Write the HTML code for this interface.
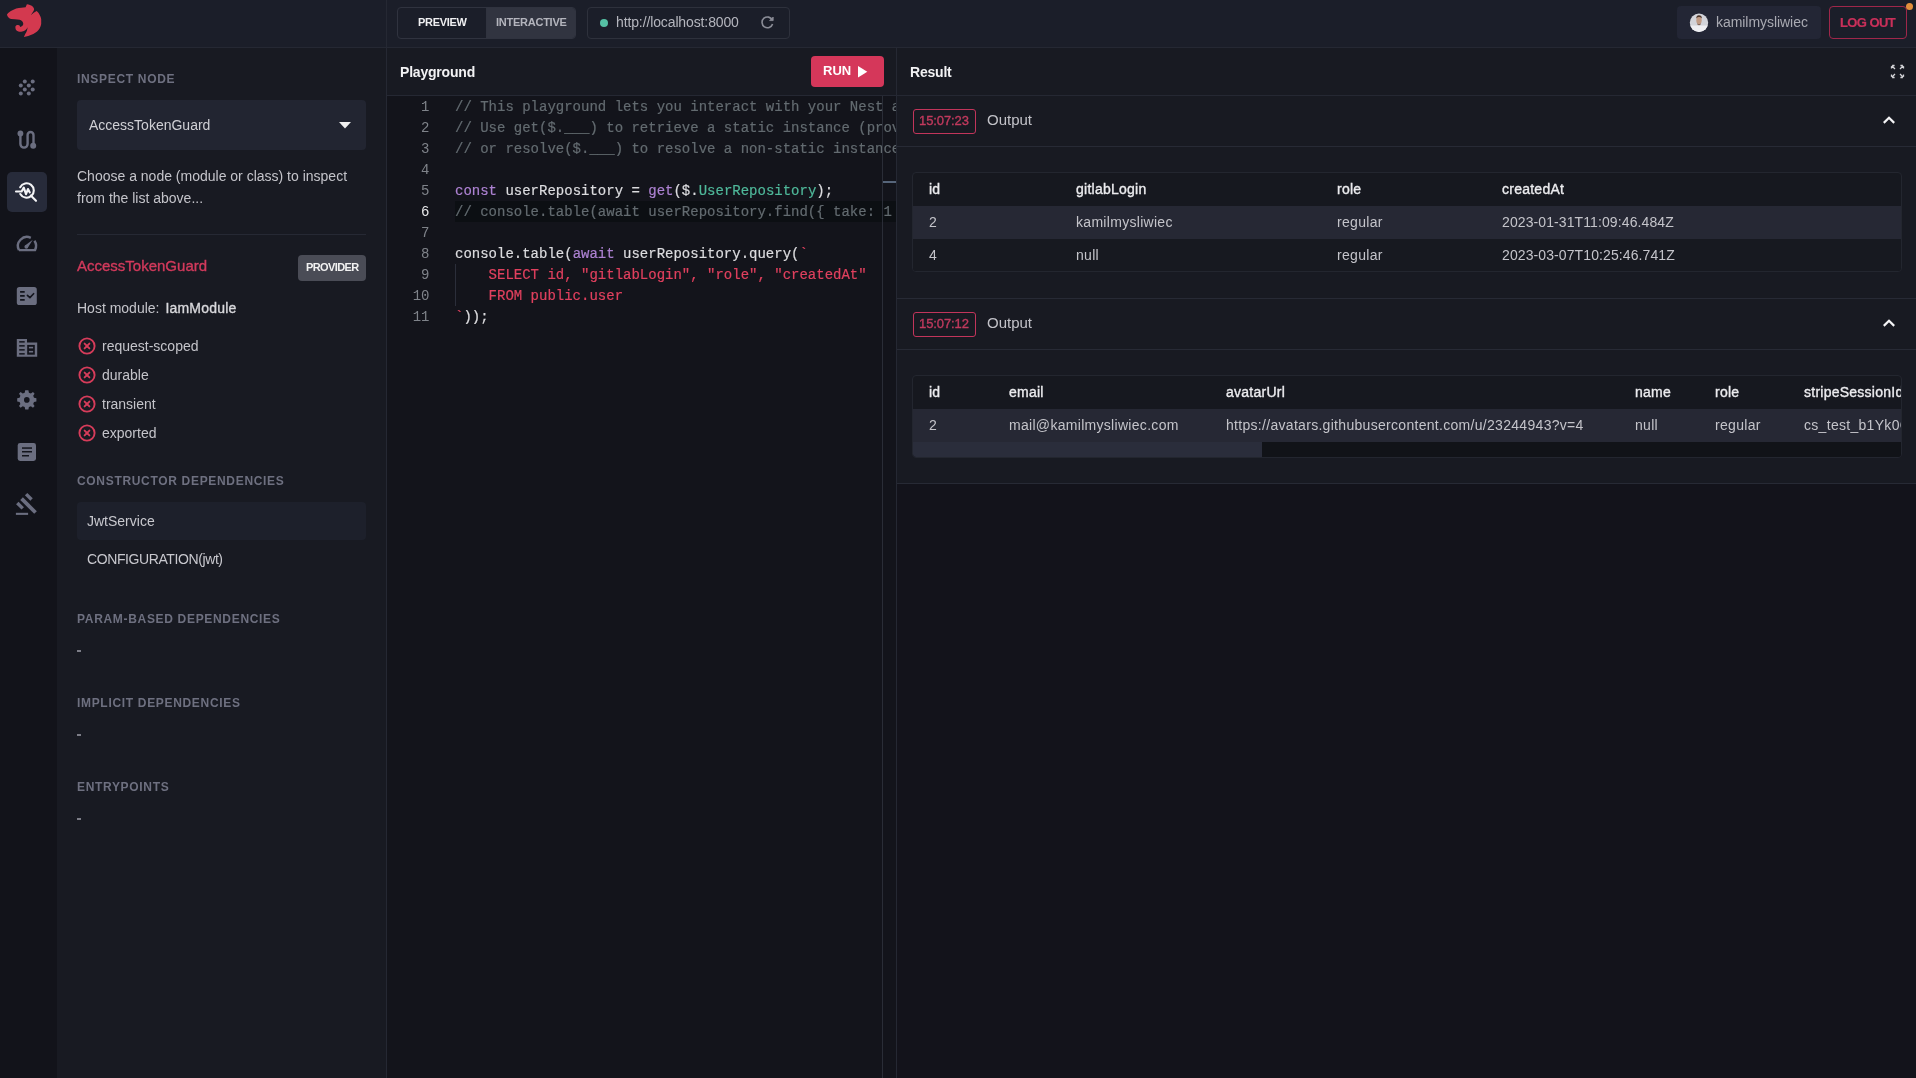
<!DOCTYPE html>
<html><head><meta charset="utf-8">
<style>
*{margin:0;padding:0;box-sizing:border-box}
html,body{width:1916px;height:1078px;overflow:hidden;background:#181a22;font-family:"Liberation Sans",sans-serif;color:#d4d4d8}
.a{position:absolute}
.t{position:absolute;white-space:nowrap;line-height:20px;will-change:transform}
</style></head><body>
<div class="a" style="left:0;top:0;width:1916px;height:47px;background:#1b1e29"></div>
<div class="a" style="left:0;top:47px;width:1916px;height:1px;background:#252833"></div>
<div class="a" style="left:0;top:48px;width:57px;height:1030px;background:#12131a"></div>
<div class="a" style="left:386px;top:0;width:1px;height:1078px;background:#252833"></div>
<div class="a" style="left:896px;top:48px;width:1px;height:1030px;background:#252833"></div>
<div class="a" style="left:387px;top:95px;width:1529px;height:1px;background:#252833"></div>
<div class="a" style="left:387px;top:96px;width:509px;height:982px;background:#13141b"></div>
<svg class="a" style="left:0;top:0" width="56" height="46" viewBox="0 0 56 46">
<path fill="#d3394f" d="M7.0 14.3 L8.5 12.8 Q10.5 11 12.4 10.2 L16.2 8.5 Q19 7.8 21.3 7.7 L25.6 7.3 L26.9 4.3 Q28.5 4.4 29.9 5.1 Q32 5.8 32.9 6.8 Q34.3 8.2 34.1 9.8 Q33.5 11.5 32.4 12.8 L30.7 15.4 Q32.2 14 33.7 12.8 L36.7 11.1 Q38.6 12.8 39.7 14.9 Q41 17 41.2 19.2 L41.2 23.9 Q40.8 26.3 39.7 28.2 Q38.6 30 37.1 31.6 Q35.4 33 33.3 34.1 Q30.8 35.2 28.2 35.9 L23.9 36.9 Q24.6 35.5 25.2 34.1 Q26.2 32.4 26.9 30.7 L27.7 27.3 Q26.8 28.8 25.6 29.9 Q24 31 22.2 31.6 Q20.2 32 18.4 31.6 Q16.5 30.8 15.8 29.4 Q15.2 28 15.4 26.5 Q16 25.1 17.1 25 Q18.5 24.8 19.2 25.2 Q20 26 20.1 26.9 Q21.4 26.6 22.2 26 Q23.2 25 23.3 23.9 Q23.2 22.4 22.2 21.3 Q21 20.2 19.6 19.8 Q17.5 19.2 14.9 19.2 L11.1 19 Q9.6 18.5 8.5 17.5 Q7.6 16.6 7.3 15.8 Z"/>
</svg>
<!-- SIDE -->
<div class="a" style="left:7px;top:172px;width:40px;height:40px;background:#272b3a;border-radius:5px"></div>
<svg class="a" style="left:0;top:48px" width="57" height="480" viewBox="0 48 57 480">
<g fill="#6b6e80">
<circle cx="24.8" cy="81.6" r="2"/><circle cx="32.7" cy="81.6" r="2"/>
<circle cx="20.8" cy="85.6" r="2"/><circle cx="28.8" cy="85.6" r="2"/>
<circle cx="24.8" cy="89.6" r="2"/><circle cx="32.7" cy="89.6" r="2"/>
<circle cx="20.8" cy="93.5" r="2"/><circle cx="28.8" cy="93.5" r="2"/>
</g>
<g fill="none" stroke="#6b6e80" stroke-width="2.4" stroke-linecap="round">
<path d="M20.4 133.5 V144 A3.6 3.6 0 0 0 27.6 144 V135 A2.95 2.95 0 0 1 33.5 135 V145.8"/>
</g>
<circle cx="20.4" cy="133.5" r="2.9" fill="#6b6e80"/><circle cx="33.2" cy="145.8" r="3" fill="#6b6e80"/>
<!-- active inspect -->
<g fill="none" stroke="#f4f4f6" stroke-width="2.1" stroke-linecap="round" stroke-linejoin="round">
<path d="M20.2 187.2 A7.2 7.2 0 1 1 20.3 194"/>
<path d="M30.8 195.6 L36 200.8"/>
<path d="M16 191.5 H21.6 L23.8 187.6 L26 194.2 L28 189 L29.8 192.4"/>
</g>
<!-- gauge -->
<g fill="none" stroke="#6b6e80" stroke-width="2.4" stroke-linecap="butt">
<path d="M19 250.1 A9 9 0 0 1 30.8 237.8"/>
<path d="M34.4 240.8 A9 9 0 0 1 35 250.1 H19"/>
</g>
<path d="M25 245.6 L32.8 239.8 L27.6 248 Z" fill="#6b6e80"/>
<circle cx="26.3" cy="246.8" r="1.9" fill="#6b6e80"/>
<!-- checklist -->
<rect x="16.8" y="287.1" width="20" height="17.9" rx="2.6" fill="#6b6e80"/>
<g stroke="#13141c" stroke-width="1.6" fill="none">
<path d="M20.1 291.9 H24.7 M20.1 295.9 H24.7 M20.1 299.9 H24.7"/>
<path d="M27.4 295.3 L29.9 297.6 L33.6 293.7" stroke-linecap="round" stroke-linejoin="round"/>
</g>
<!-- building -->
<path d="M16.8 338.9 H27 V342.6 H37.2 V356.8 H16.8 Z" fill="#6b6e80"/>
<g fill="#13141c">
<rect x="19.2" y="341.1" width="5.5" height="1.5"/><rect x="19.2" y="345.1" width="5.5" height="1.5"/>
<rect x="19.2" y="349.1" width="5.5" height="1.5"/><rect x="19.2" y="353.1" width="5.5" height="1.5"/>
<rect x="27.2" y="344.9" width="7.6" height="9.8"/>
</g>
<g fill="#6b6e80"><rect x="28.9" y="346.8" width="4.2" height="1.6"/><rect x="28.9" y="350.9" width="4.2" height="1.6"/></g>
<!-- gear -->
<g transform="translate(26.8 399.9)" fill="#6b6e80">
<path d="M-1.6 -9.6 H1.6 L2.1 -7.2 L4.1 -6.4 L6.2 -7.8 L7.8 -6.2 L6.4 -4.1 L7.2 -2.1 L9.6 -1.6 V1.6 L7.2 2.1 L6.4 4.1 L7.8 6.2 L6.2 7.8 L4.1 6.4 L2.1 7.2 L1.6 9.6 H-1.6 L-2.1 7.2 L-4.1 6.4 L-6.2 7.8 L-7.8 6.2 L-6.4 4.1 L-7.2 2.1 L-9.6 1.6 V-1.6 L-7.2 -2.1 L-6.4 -4.1 L-7.8 -6.2 L-6.2 -7.8 L-4.1 -6.4 L-2.1 -7.2 Z"/>
<circle r="6.6"/>
</g>
<circle cx="26.8" cy="399.9" r="2.8" fill="#13141c"/>
<!-- document -->
<rect x="17.7" y="443" width="18.3" height="18" rx="2.4" fill="#6b6e80"/>
<g fill="#13141c"><rect x="22" y="447.3" width="10" height="1.5"/><rect x="22" y="451" width="10" height="1.5"/><rect x="22" y="455" width="7" height="1.5"/></g>
<!-- gavel -->
<g fill="#6b6e80">
<rect x="15.9" y="512.8" width="12.2" height="2.1"/>
<g transform="translate(28.55 505.6) rotate(45)">
<rect x="-9.85" y="-1.85" width="19.7" height="3.7"/>
<rect x="-9.85" y="-8.1" width="7.7" height="3.4"/>
<rect x="-9.85" y="4.38" width="7.7" height="3.4"/>
</g>
</g>
</svg>
<!-- /SIDE -->
<div class="t" style="left:77px;top:69.14px;font-size:12px;color:#6e7080;font-weight:bold;letter-spacing:0.68px;">INSPECT NODE</div>
<div class="a" style="left:77px;top:100px;width:289px;height:50px;background:#222531;border-radius:4px"></div>
<div class="t" style="left:89px;top:114.95px;font-size:14px;color:#d0d0d5;">AccessTokenGuard</div>
<svg class="a" style="left:338px;top:121px" width="14" height="8" viewBox="0 0 14 8"><path d="M1 1 L13 1 L7 7.5 Z" fill="#f0f0f0"/></svg>
<div class="t" style="left:77px;top:165.95px;font-size:14px;color:#c4c4ca;">Choose a node (module or class) to inspect</div>
<div class="t" style="left:77px;top:187.75px;font-size:14px;color:#c4c4ca;">from the list above...</div>
<div class="a" style="left:77px;top:234px;width:289px;height:1px;background:#262934"></div>
<div class="t" style="left:77px;top:255.60px;font-size:15px;color:#d23a5c;-webkit-text-stroke:0.35px currentColor;">AccessTokenGuard</div>
<div class="a" style="left:298px;top:255px;width:68px;height:26px;background:#4a4c56;border-radius:4px"></div>
<div class="t" style="left:305.5px;top:257.49px;font-size:11px;color:#f2f2f2;font-weight:bold;letter-spacing:-0.6px;">PROVIDER</div>
<div class="t" style="left:77px;top:297.75px;font-size:14px;color:#c4c4ca;">Host module: <span style="color:#d8d8dc;margin-left:2px;-webkit-text-stroke:0.35px #d8d8dc;letter-spacing:0.2px">IamModule</span></div>
<svg class="a" style="left:77px;top:335.6px" width="20" height="20" viewBox="0 0 20 20"><circle cx="10" cy="10" r="7.6" fill="none" stroke="#d63c5a" stroke-width="1.9"/><path d="M7.6 7.6 L12.4 12.4 M12.4 7.6 L7.6 12.4" stroke="#d63c5a" stroke-width="1.9" stroke-linecap="round"/></svg>
<div class="t" style="left:102px;top:335.75px;font-size:14px;color:#c4c4ca;">request-scoped</div>
<svg class="a" style="left:77px;top:364.6px" width="20" height="20" viewBox="0 0 20 20"><circle cx="10" cy="10" r="7.6" fill="none" stroke="#d63c5a" stroke-width="1.9"/><path d="M7.6 7.6 L12.4 12.4 M12.4 7.6 L7.6 12.4" stroke="#d63c5a" stroke-width="1.9" stroke-linecap="round"/></svg>
<div class="t" style="left:102px;top:364.75px;font-size:14px;color:#c4c4ca;">durable</div>
<svg class="a" style="left:77px;top:393.6px" width="20" height="20" viewBox="0 0 20 20"><circle cx="10" cy="10" r="7.6" fill="none" stroke="#d63c5a" stroke-width="1.9"/><path d="M7.6 7.6 L12.4 12.4 M12.4 7.6 L7.6 12.4" stroke="#d63c5a" stroke-width="1.9" stroke-linecap="round"/></svg>
<div class="t" style="left:102px;top:393.75px;font-size:14px;color:#c4c4ca;">transient</div>
<svg class="a" style="left:77px;top:422.6px" width="20" height="20" viewBox="0 0 20 20"><circle cx="10" cy="10" r="7.6" fill="none" stroke="#d63c5a" stroke-width="1.9"/><path d="M7.6 7.6 L12.4 12.4 M12.4 7.6 L7.6 12.4" stroke="#d63c5a" stroke-width="1.9" stroke-linecap="round"/></svg>
<div class="t" style="left:102px;top:422.75px;font-size:14px;color:#c4c4ca;">exported</div>
<div class="t" style="left:77px;top:470.64px;font-size:12px;color:#6e7080;font-weight:bold;letter-spacing:0.68px;">CONSTRUCTOR DEPENDENCIES</div>
<div class="a" style="left:77px;top:502px;width:289px;height:38px;background:#1d202b;border-radius:4px"></div>
<div class="t" style="left:87px;top:510.85px;font-size:14px;color:#c8c8ce;">JwtService</div>
<div class="t" style="left:87px;top:549.15px;font-size:14px;color:#c8c8ce;letter-spacing:-0.4px;">CONFIGURATION(jwt)</div>
<div class="t" style="left:77px;top:609.04px;font-size:12px;color:#6e7080;font-weight:bold;letter-spacing:0.68px;">PARAM-BASED DEPENDENCIES</div>
<div class="a" style="left:77px;top:650px;width:4px;height:2px;background:#7c7d87"></div>
<div class="t" style="left:77px;top:692.94px;font-size:12px;color:#6e7080;font-weight:bold;letter-spacing:0.68px;">IMPLICIT DEPENDENCIES</div>
<div class="a" style="left:77px;top:734px;width:4px;height:2px;background:#7c7d87"></div>
<div class="t" style="left:77px;top:776.94px;font-size:12px;color:#6e7080;font-weight:bold;letter-spacing:0.68px;">ENTRYPOINTS</div>
<div class="a" style="left:77px;top:818px;width:4px;height:2px;background:#7c7d87"></div>
<div class="a" style="left:397px;top:7px;width:179px;height:32px;border:1px solid #30333f;border-radius:4px;overflow:hidden"><div class="a" style="left:88px;top:0;width:90px;height:30px;background:#313440;border-left:1px solid #30333f"></div></div>
<div class="t" style="left:417.5px;top:12.19px;font-size:11px;color:#f0f0f2;font-weight:bold;letter-spacing:-0.3px;">PREVIEW</div>
<div class="t" style="left:495.5px;top:12.19px;font-size:11px;color:#b4b5bd;font-weight:bold;letter-spacing:-0.25px;">INTERACTIVE</div>
<div class="a" style="left:587px;top:7px;width:203px;height:32px;border:1px solid #2e313c;border-radius:4px"></div>
<div class="a" style="left:600px;top:19px;width:8px;height:8px;border-radius:50%;background:#55c0a4"></div>
<div class="t" style="left:616px;top:12.15px;font-size:14px;color:#b5b6be;letter-spacing:-0.12px;">http://localhost:8000</div>
<svg class="a" style="left:759px;top:14px" width="17" height="17" viewBox="0 0 17 17"><path d="M13.4 6.2 A5.4 5.4 0 1 0 13.6 10" fill="none" stroke="#8a8c96" stroke-width="1.6"/><path d="M10.6 6.6 L14.2 6.6 L14.2 3 Z" fill="#8a8c96" stroke="#8a8c96" stroke-width="0.8" stroke-linejoin="round"/></svg>
<div class="a" style="left:1677px;top:6px;width:144px;height:33px;background:#232635;border-radius:4px"></div>
<svg class="a" style="left:1689px;top:13px" width="20" height="20" viewBox="0 0 20 20"><defs><clipPath id="av"><circle cx="10" cy="9.8" r="9.2"/></clipPath></defs><g clip-path="url(#av)"><rect width="20" height="20" fill="#d2d3d9"/><rect y="12.5" width="20" height="8" fill="#eeeef2"/><ellipse cx="10" cy="7.2" rx="2.7" ry="4" fill="#c09a84"/><path d="M7.2 5.5 Q7.5 2 10 2.2 Q12.8 2.2 12.9 5.5 Q12 3.8 10 4 Q8 3.8 7.2 5.5Z" fill="#4a3428"/><path d="M8.3 10.2 Q10 12.4 11.7 10.2 L11.5 11.8 Q10 12.6 8.5 11.8Z" fill="#7a5a4a"/></g></svg>
<div class="t" style="left:1716px;top:12.15px;font-size:14px;color:#a9aab2;letter-spacing:-0.05px;">kamilmysliwiec</div>
<div class="a" style="left:1829px;top:6px;width:78px;height:33px;border:1.5px solid #9f274a;border-radius:4px"></div>
<div class="t" style="left:1840px;top:12.50px;font-size:13px;color:#c9305a;font-weight:bold;letter-spacing:-0.6px;-webkit-text-stroke:0.2px #c9305a;">LOG OUT</div>
<div class="a" style="left:1905.5px;top:2.5px;width:7px;height:7px;border-radius:50%;background:#e38f3c"></div>
<div class="t" style="left:399.5px;top:62.15px;font-size:14px;color:#f2f2f4;font-weight:bold;letter-spacing:-0.2px;">Playground</div>
<div class="a" style="left:811px;top:56px;width:73px;height:31px;background:#d5375a;border-radius:4px"></div>
<div class="t" style="left:823px;top:61.30px;font-size:13px;color:#ffffff;font-weight:bold;">RUN</div>
<svg class="a" style="left:857px;top:65px" width="12" height="14" viewBox="0 0 12 14"><path d="M1 1 L10.3 6.7 L1 12.5 Z" fill="#fff"/></svg>
<div class="a" style="left:455px;top:201px;width:441px;height:21px;background:#0c0f13"></div>
<div class="a" style="left:455px;top:96px;width:441px;height:300px;overflow:hidden">
<div class="t" style="left:0;top:1.17px;font-size:14px;font-family:'Liberation Mono',monospace;white-space:pre;-webkit-text-stroke:0.2px currentColor"><span style="color:#636b70">// This playground lets you interact with your Nest application</span></div>
<div class="t" style="left:0;top:22.17px;font-size:14px;font-family:'Liberation Mono',monospace;white-space:pre;-webkit-text-stroke:0.2px currentColor"><span style="color:#636b70">// Use get($.___) to retrieve a static instance (providers, controllers)</span></div>
<div class="t" style="left:0;top:43.17px;font-size:14px;font-family:'Liberation Mono',monospace;white-space:pre;-webkit-text-stroke:0.2px currentColor"><span style="color:#636b70">// or resolve($.___) to resolve a non-static instance</span></div>
<div class="t" style="left:0;top:64.17px;font-size:14px;font-family:'Liberation Mono',monospace;white-space:pre;-webkit-text-stroke:0.2px currentColor"></div>
<div class="t" style="left:0;top:85.17px;font-size:14px;font-family:'Liberation Mono',monospace;white-space:pre;-webkit-text-stroke:0.2px currentColor"><span style="color:#ad82d2">const</span><span style="color:#dcdcdf"> userRepository = </span><span style="color:#ad82d2">get</span><span style="color:#dcdcdf">($.</span><span style="color:#4fb89a">UserRepository</span><span style="color:#dcdcdf">);</span></div>
<div class="t" style="left:0;top:106.17px;font-size:14px;font-family:'Liberation Mono',monospace;white-space:pre;-webkit-text-stroke:0.2px currentColor"><span style="color:#636b70">// console.table(await userRepository.find({ take: 1 }));</span></div>
<div class="t" style="left:0;top:127.17px;font-size:14px;font-family:'Liberation Mono',monospace;white-space:pre;-webkit-text-stroke:0.2px currentColor"></div>
<div class="t" style="left:0;top:148.17px;font-size:14px;font-family:'Liberation Mono',monospace;white-space:pre;-webkit-text-stroke:0.2px currentColor"><span style="color:#dcdcdf">console.table(</span><span style="color:#ad82d2">await</span><span style="color:#dcdcdf"> userRepository.query(</span><span style="color:#e0405e">`</span></div>
<div class="t" style="left:0;top:169.17px;font-size:14px;font-family:'Liberation Mono',monospace;white-space:pre;-webkit-text-stroke:0.2px currentColor"><span style="color:#e0405e">    SELECT id, &quot;gitlabLogin&quot;, &quot;role&quot;, &quot;createdAt&quot;</span></div>
<div class="t" style="left:0;top:190.17px;font-size:14px;font-family:'Liberation Mono',monospace;white-space:pre;-webkit-text-stroke:0.2px currentColor"><span style="color:#e0405e">    FROM public.user</span></div>
<div class="t" style="left:0;top:211.17px;font-size:14px;font-family:'Liberation Mono',monospace;white-space:pre;-webkit-text-stroke:0.2px currentColor"><span style="color:#e0405e">`</span><span style="color:#dcdcdf">));</span></div>
</div>
<div class="t" style="left:400px;width:29.5px;text-align:right;top:97.17px;font-size:14px;font-family:'Liberation Mono',monospace;color:#7f838a">1</div>
<div class="t" style="left:400px;width:29.5px;text-align:right;top:118.17px;font-size:14px;font-family:'Liberation Mono',monospace;color:#7f838a">2</div>
<div class="t" style="left:400px;width:29.5px;text-align:right;top:139.17px;font-size:14px;font-family:'Liberation Mono',monospace;color:#7f838a">3</div>
<div class="t" style="left:400px;width:29.5px;text-align:right;top:160.17px;font-size:14px;font-family:'Liberation Mono',monospace;color:#7f838a">4</div>
<div class="t" style="left:400px;width:29.5px;text-align:right;top:181.17px;font-size:14px;font-family:'Liberation Mono',monospace;color:#7f838a">5</div>
<div class="t" style="left:400px;width:29.5px;text-align:right;top:202.17px;font-size:14px;font-family:'Liberation Mono',monospace;color:#e8e8ea">6</div>
<div class="t" style="left:400px;width:29.5px;text-align:right;top:223.17px;font-size:14px;font-family:'Liberation Mono',monospace;color:#7f838a">7</div>
<div class="t" style="left:400px;width:29.5px;text-align:right;top:244.17px;font-size:14px;font-family:'Liberation Mono',monospace;color:#7f838a">8</div>
<div class="t" style="left:400px;width:29.5px;text-align:right;top:265.17px;font-size:14px;font-family:'Liberation Mono',monospace;color:#7f838a">9</div>
<div class="t" style="left:400px;width:29.5px;text-align:right;top:286.17px;font-size:14px;font-family:'Liberation Mono',monospace;color:#7f838a">10</div>
<div class="t" style="left:400px;width:29.5px;text-align:right;top:307.17px;font-size:14px;font-family:'Liberation Mono',monospace;color:#7f838a">11</div>
<div class="a" style="left:455px;top:264px;width:1px;height:42px;background:#2b2e3a"></div>
<div class="a" style="left:882px;top:96px;width:1px;height:982px;background:#2a2d37"></div>
<div class="a" style="left:883px;top:181px;width:13px;height:2px;background:#56657a"></div>
<div class="t" style="left:909.5px;top:62.15px;font-size:14px;color:#f2f2f4;font-weight:bold;letter-spacing:-0.2px;">Result</div>
<svg class="a" style="left:1890px;top:64px" width="15" height="15" viewBox="0 0 15 15"><g fill="none" stroke="#d4d4d8" stroke-width="1.3"><path d="M1.8 1.8 L5 5 M1.5 2.2 V4.6 M2.2 1.5 H4.6"/><path d="M13.2 1.8 L10 5 M13.5 2.2 V4.6 M12.8 1.5 H10.4"/><path d="M1.8 13.2 L5 10 M1.5 12.8 V10.4 M2.2 13.5 H4.6"/><path d="M13.2 13.2 L10 10 M13.5 12.8 V10.4 M12.8 13.5 H10.4"/></g></svg>
<div class="a" style="left:897px;top:96px;width:1019px;height:982px;overflow:hidden">
</div>
<div class="a" style="left:913px;top:109px;width:63px;height:25px;border:1.5px solid #c2355b;border-radius:3px"></div>
<div class="t" style="left:919.3px;top:110.50px;font-size:13px;color:#c23a5e;-webkit-text-stroke:0.35px currentColor;letter-spacing:-0.1px;">15:07:23</div>
<div class="t" style="left:986.5px;top:109.80px;font-size:15px;color:#c2c2c8;">Output</div>
<svg class="a" style="left:1882px;top:115px" width="14" height="10" viewBox="0 0 14 10"><path d="M1.8 7.9 L7 2.8 L12.2 7.9" fill="none" stroke="#f4f4f6" stroke-width="2.2"/></svg>
<div class="a" style="left:897px;top:146px;width:1019px;height:1px;background:#272a35"></div>
<div class="a" style="left:912px;top:172px;width:990px;height:100px;border:1px solid #23262f;border-radius:4px;overflow:hidden;background:#16181f">
<div class="a" style="left:0;top:33px;width:990px;height:33px;background:#262834"></div>
<div class="a" style="left:0;top:66px;width:990px;height:33px;background:#171920"></div>
</div>
<div class="a" style="left:0;top:0;width:1901px;height:1078px;overflow:hidden">
<div class="t" style="left:929px;top:179.15px;font-size:14px;color:#ececef;-webkit-text-stroke:0.35px currentColor;letter-spacing:0.25px;">id</div>
<div class="t" style="left:1076px;top:179.15px;font-size:14px;color:#ececef;-webkit-text-stroke:0.35px currentColor;letter-spacing:0.25px;">gitlabLogin</div>
<div class="t" style="left:1337px;top:179.15px;font-size:14px;color:#ececef;-webkit-text-stroke:0.35px currentColor;letter-spacing:0.25px;">role</div>
<div class="t" style="left:1502px;top:179.15px;font-size:14px;color:#ececef;-webkit-text-stroke:0.35px currentColor;letter-spacing:0.25px;">createdAt</div>
<div class="t" style="left:929px;top:212.15px;font-size:14px;color:#c4c4ca;letter-spacing:0.3px;">2</div>
<div class="t" style="left:1076px;top:212.15px;font-size:14px;color:#c4c4ca;letter-spacing:0.3px;">kamilmysliwiec</div>
<div class="t" style="left:1337px;top:212.15px;font-size:14px;color:#c4c4ca;letter-spacing:0.3px;">regular</div>
<div class="t" style="left:1502px;top:212.15px;font-size:14px;color:#c4c4ca;letter-spacing:0.1px;">2023-01-31T11:09:46.484Z</div>
<div class="t" style="left:929px;top:245.15px;font-size:14px;color:#c4c4ca;letter-spacing:0.3px;">4</div>
<div class="t" style="left:1076px;top:245.15px;font-size:14px;color:#c4c4ca;letter-spacing:0.3px;">null</div>
<div class="t" style="left:1337px;top:245.15px;font-size:14px;color:#c4c4ca;letter-spacing:0.3px;">regular</div>
<div class="t" style="left:1502px;top:245.15px;font-size:14px;color:#c4c4ca;letter-spacing:0.1px;">2023-03-07T10:25:46.741Z</div>
</div>
<div class="a" style="left:897px;top:298px;width:1019px;height:1px;background:#272a35"></div>
<div class="a" style="left:913px;top:312px;width:63px;height:25px;border:1.5px solid #c2355b;border-radius:3px"></div>
<div class="t" style="left:919.3px;top:313.50px;font-size:13px;color:#c23a5e;-webkit-text-stroke:0.35px currentColor;letter-spacing:-0.1px;">15:07:12</div>
<div class="t" style="left:986.5px;top:312.80px;font-size:15px;color:#c2c2c8;">Output</div>
<svg class="a" style="left:1882px;top:318px" width="14" height="10" viewBox="0 0 14 10"><path d="M1.8 7.9 L7 2.8 L12.2 7.9" fill="none" stroke="#f4f4f6" stroke-width="2.2"/></svg>
<div class="a" style="left:897px;top:349px;width:1019px;height:1px;background:#272a35"></div>
<div class="a" style="left:912px;top:375px;width:990px;height:83px;border:1px solid #23262f;border-radius:4px;overflow:hidden;background:#16181f">
<div class="a" style="left:0;top:33px;width:990px;height:33px;background:#262834"></div>
<div class="a" style="left:0;top:66px;width:990px;height:16px;background:#111318"></div>
<div class="a" style="left:0;top:66px;width:349px;height:16px;background:#2a2d3b"></div>
</div>
<div class="a" style="left:0;top:0;width:1901px;height:1078px;overflow:hidden">
<div class="t" style="left:929px;top:382.15px;font-size:14px;color:#ececef;-webkit-text-stroke:0.35px currentColor;letter-spacing:0.25px;">id</div>
<div class="t" style="left:1009px;top:382.15px;font-size:14px;color:#ececef;-webkit-text-stroke:0.35px currentColor;letter-spacing:0.25px;">email</div>
<div class="t" style="left:1226px;top:382.15px;font-size:14px;color:#ececef;-webkit-text-stroke:0.35px currentColor;letter-spacing:0.25px;">avatarUrl</div>
<div class="t" style="left:1635px;top:382.15px;font-size:14px;color:#ececef;-webkit-text-stroke:0.35px currentColor;letter-spacing:0.25px;">name</div>
<div class="t" style="left:1715px;top:382.15px;font-size:14px;color:#ececef;-webkit-text-stroke:0.35px currentColor;letter-spacing:0.25px;">role</div>
<div class="t" style="left:1804px;top:382.15px;font-size:14px;color:#ececef;-webkit-text-stroke:0.35px currentColor;letter-spacing:0.25px;">stripeSessionId</div>
<div class="t" style="left:929px;top:415.15px;font-size:14px;color:#c4c4ca;letter-spacing:0.3px;">2</div>
<div class="t" style="left:1009px;top:415.15px;font-size:14px;color:#c4c4ca;letter-spacing:0.3px;">mail@kamilmysliwiec.com</div>
<div class="t" style="left:1226px;top:415.15px;font-size:14px;color:#c4c4ca;letter-spacing:0.3px;">https://avatars.githubusercontent.com/u/23244943?v=4</div>
<div class="t" style="left:1635px;top:415.15px;font-size:14px;color:#c4c4ca;letter-spacing:0.3px;">null</div>
<div class="t" style="left:1715px;top:415.15px;font-size:14px;color:#c4c4ca;letter-spacing:0.3px;">regular</div>
<div class="t" style="left:1804px;top:415.15px;font-size:14px;color:#c4c4ca;letter-spacing:0.3px;">cs_test_b1Yk0OaBcDeF</div>
</div>
<div class="a" style="left:897px;top:483px;width:1019px;height:1px;background:#272a35"></div>
<div class="a" style="left:897px;top:484px;width:1019px;height:594px;background:#13131b"></div>
</body></html>
